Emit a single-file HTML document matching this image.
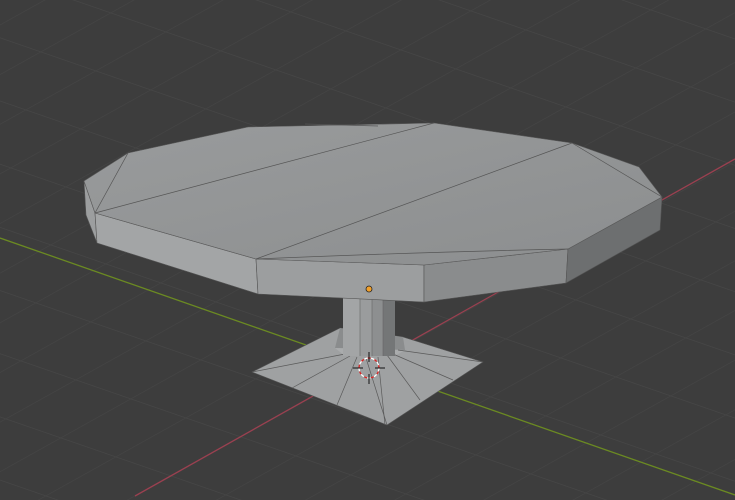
<!DOCTYPE html>
<html><head><meta charset="utf-8"><style>html,body{margin:0;padding:0;background:#3d3d3d;overflow:hidden}svg{display:block}</style></head>
<body>
<svg width="735" height="500" viewBox="0 0 735 500" xmlns="http://www.w3.org/2000/svg">
<defs>
<pattern id="g" width="100" height="100" patternUnits="userSpaceOnUse" patternTransform="matrix(0.55 0.19 0.7 -0.39 240 437)">
<path d="M0 0H100M0 0V100" stroke="#464646" stroke-width="2.5" fill="none"/>
</pattern>
<linearGradient id="top" x1="0" y1="0" x2="1" y2="1"><stop offset="0" stop-color="#999b9c"/><stop offset="1" stop-color="#8c8e8f"/></linearGradient>
</defs>
<rect width="735" height="500" fill="#3d3d3d"/>
<rect width="735" height="500" fill="url(#g)"/>
<line x1="0" y1="238" x2="735" y2="495" stroke="#6b8a22" stroke-width="1.3"/>
<line x1="135" y1="496" x2="735" y2="159" stroke="#9a4050" stroke-width="1.3"/>
<polygon points="252,372 340,328 403,337 483,362 387,425" fill="#9fa1a2" stroke="#555" stroke-width="0.6"/>
<polygon points="340,328 403,337 405,350 335,348" fill="#8a8c8d"/>
<polygon points="335,348 405,350 395,356 345,356" fill="#aaacad"/>
<g stroke="#5a5a5a" stroke-width="0.7">
<line x1="345" y1="354" x2="252" y2="372"/><line x1="350" y1="356" x2="292" y2="388"/>
<line x1="357" y1="357" x2="337" y2="405"/><line x1="366" y1="358" x2="387" y2="425"/>
<line x1="378" y1="357" x2="385" y2="425"/><line x1="387" y1="355" x2="420" y2="400"/>
<line x1="393" y1="354" x2="453" y2="380"/><line x1="398" y1="350" x2="483" y2="362"/>
</g>
<rect x="343" y="295" width="17" height="61" fill="#a3a5a6"/>
<rect x="360" y="295" width="12" height="61" fill="#9a9c9d"/>
<rect x="372" y="295" width="11" height="61" fill="#8d8f90"/>
<rect x="383" y="295" width="12" height="61" fill="#747677"/>
<g stroke="#666" stroke-width="0.6"><line x1="360" y1="295" x2="360" y2="356"/><line x1="372" y1="295" x2="372" y2="356"/><line x1="383" y1="295" x2="383" y2="356"/></g>
<circle cx="369" cy="368" r="10" fill="none" stroke="#fff" stroke-width="1.3" stroke-dasharray="4 3"/>
<circle cx="369" cy="368" r="10" fill="none" stroke="#d22" stroke-width="1.3" stroke-dasharray="3 4" stroke-dashoffset="3.5"/>
<g stroke="#111" stroke-width="1"><line x1="369" y1="352" x2="369" y2="362"/><line x1="369" y1="374" x2="369" y2="384"/><line x1="353" y1="368" x2="363" y2="368"/><line x1="375" y1="368" x2="385" y2="368"/></g>
<polygon points="84,181 95,213 97,243 86,215" fill="#9c9e9f" stroke="#555" stroke-width="0.6"/>
<polygon points="95,213 256,259 258,294 97,243" fill="#a3a5a6" stroke="#555" stroke-width="0.6"/>
<polygon points="256,259 424,265 424,302 258,294" fill="#9c9e9f" stroke="#555" stroke-width="0.6"/>
<polygon points="424,265 568,249 566,283 424,302" fill="#8a8c8d" stroke="#555" stroke-width="0.6"/>
<polygon points="568,249 662,197 660,230 566,283" fill="#6d6f70" stroke="#555" stroke-width="0.6"/>
<polygon points="128,153 248,127 434,123 572,143 639,167 662,197 568,249 424,265 256,259 95,213 84,181" fill="url(#top)" stroke="#5a5a5a" stroke-width="0.6"/>
<g stroke="#555" stroke-width="0.7" fill="none">
<line x1="128" y1="153" x2="95" y2="213"/>
<line x1="434" y1="123" x2="95" y2="213"/>
<line x1="572" y1="143" x2="256" y2="259"/>
<line x1="572" y1="143" x2="662" y2="197"/>
<path d="M256 259 Q420 252 568 249"/>
<line x1="305" y1="124" x2="378" y2="126"/>
</g>
<circle cx="369" cy="289" r="3" fill="#f2a02a" stroke="#222" stroke-width="0.8"/>
</svg>
</body></html>
